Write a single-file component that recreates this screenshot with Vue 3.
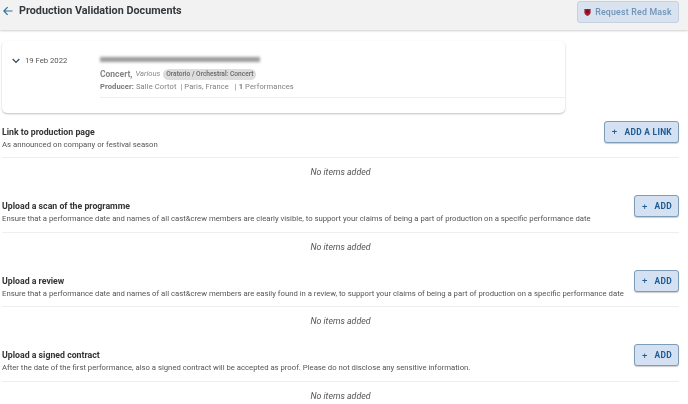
<script setup>
const sections = [
  { title: 'Link to production page', desc: 'As announced on company or festival season', btn: 'ADD A LINK' },
  { title: 'Upload a scan of the programme', desc: 'Ensure that a performance date and names of all cast&crew members are clearly visible, to support your claims of being a part of production on a specific performance date', btn: 'ADD' },
  { title: 'Upload a review', desc: 'Ensure that a performance date and names of all cast&crew members are easily found in a review, to support your claims of being a part of production on a specific performance date', btn: 'ADD' },
  { title: 'Upload a signed contract', desc: 'After the date of the first performance, also a signed contract will be accepted as proof. Please do not disclose any sensitive information.', btn: 'ADD' },
]
</script>

<template>
  <div class="page">
    <header class="topbar">
      <div class="heading">
        <svg class="back" width="10" height="10" viewBox="0 0 10 10" fill="none" stroke="#2f7299" stroke-width="1.2">
          <path d="M9.5 5H1M4.6 1.2 .9 5l3.700 3.800" />
        </svg>
        <h1>Production Validation Documents</h1>
      </div>
      <button class="mask-btn">
        <svg width="7" height="8" viewBox="0 0 9 10"><path d="M.5 1h8v4.600C8.500 8 6 9.400 4.500 10 3 9.400.5 8 .5 5.600z" fill="#a8182f" /><rect x="2.700" y="3" width="3.600" height="3" fill="#6d1020" /></svg>
        Request Red Mask
      </button>
    </header>

    <section class="card">
      <div class="date">
        <svg width="8" height="6" viewBox="0 0 8 6" fill="none" stroke="#33475b" stroke-width="1.200"><path d="M.7 1 4 4.500 7.300 1" /></svg>
        <span>19 Feb 2022</span>
      </div>
      <div class="info">
        <div class="blurred"></div>
        <div class="kind"><b>Concert,</b> <i>Various</i> <span class="chip">Oratorio / Orchestral: Concert</span></div>
        <div class="producer"><b>Producer:</b> Salle Cortot &nbsp;| Paris, France &nbsp; | <b>1</b> Performances</div>
      </div>
    </section>

    <section v-for="s in sections" :key="s.title" class="doc">
      <div class="doc-head">
        <div class="doc-text">
          <h2>{{ s.title }}</h2>
          <p>{{ s.desc }}</p>
        </div>
        <button class="add-btn"><span class="plus">+</span>{{ s.btn }}</button>
      </div>
      <div class="empty">No items added</div>
    </section>
  </div>
</template>

<style scoped>
.page { width: 688px; height: 404px; overflow: hidden; background: #fff; font-family: Roboto, "Liberation Sans", sans-serif; color: #333; filter: blur(.35px); }
.topbar { height: 30px; background: #f2f2f2; box-shadow: 0 1px 2px rgba(0,0,0,.2); display: flex; justify-content: space-between; padding: 1px 9px 0 3px; box-sizing: border-box; }
.heading { display: flex; align-items: center; gap: 6px; height: 17px; padding-top: 1px; }
.back { flex-shrink: 0; }
h1 { margin: 0; font-size: 10.800px; font-weight: 700; color: #33383c; }
.mask-btn { display: flex; align-items: center; justify-content: center; gap: 4px; width: 102px; height: 22px; background: #d9e3f0; border: 1px solid #c4d2e3; border-radius: 3px; color: #6f93b5; font: 500 8.800px Roboto, sans-serif; letter-spacing: .2px; padding: 0; }
.card { margin: 11px 0 0 2px; width: 563px; height: 71.700px; box-sizing: border-box; border-radius: 5px; box-shadow: 0 1px 2px rgba(0,0,0,.25); display: flex; padding: 14px 0 0 10px; }
.date { width: 88px; flex-shrink: 0; display: flex; align-items: flex-start; gap: 5px; font-size: 7.700px; color: #555; line-height: 11px; }
.date svg { margin-top: 3px; }
.info { flex: 1; height: 42px; border-bottom: 1px solid #eee; }
.blurred { width: 160px; height: 5px; margin-top: 2px; background: #999; filter: blur(1.500px); }
.kind { margin-top: 6px; font-size: 8px; line-height: 12px; color: #8a8a8a; display: flex; align-items: center; gap: 3px; white-space: pre; }
.kind b { font-weight: 700; font-size: 8.500px; color: #858585; }
.kind i { font-size: 7.600px; }
.chip { background: #ddd; border-radius: 7px; padding: 1px 3px; font-size: 6.600px; font-weight: 500; color: #666; line-height: 9px; }
.producer { margin-top: 1px; font-size: 7.550px; line-height: 11px; color: #808080; letter-spacing: .1px; }
.producer b { font-weight: 700; color: #777; }
.doc { margin-left: 2px; width: 677px; height: 74.500px; }
.doc-head { height: 44.500px; display: flex; justify-content: space-between; align-items: flex-start; border-bottom: 1px solid #eee; }
.doc-text { padding-top: 13px; }
h2 { margin: 0; font-size: 8.750px; font-weight: 700; line-height: 12px; color: #333; }
p { margin: 1px 0 0; font-size: 7.720px; line-height: 11px; color: #555; white-space: nowrap; }
.add-btn { flex-shrink: 0; height: 22px; margin-top: 8px; padding: 0 6px 0 7px; background: #d3e1f2; border: 1px solid #7d9cb8; border-radius: 3px; box-shadow: 0 1px 1px rgba(0,0,0,.2); color: #1f5a92; font: 700 8.400px Roboto, sans-serif; letter-spacing: .3px; display: flex; align-items: center; gap: 7px; }
.plus { font-size: 9.500px; font-weight: 400; }
.empty { text-align: center; font-style: italic; font-size: 8.800px; color: #555; line-height: 12px; margin-top: 8px; }
</style>
